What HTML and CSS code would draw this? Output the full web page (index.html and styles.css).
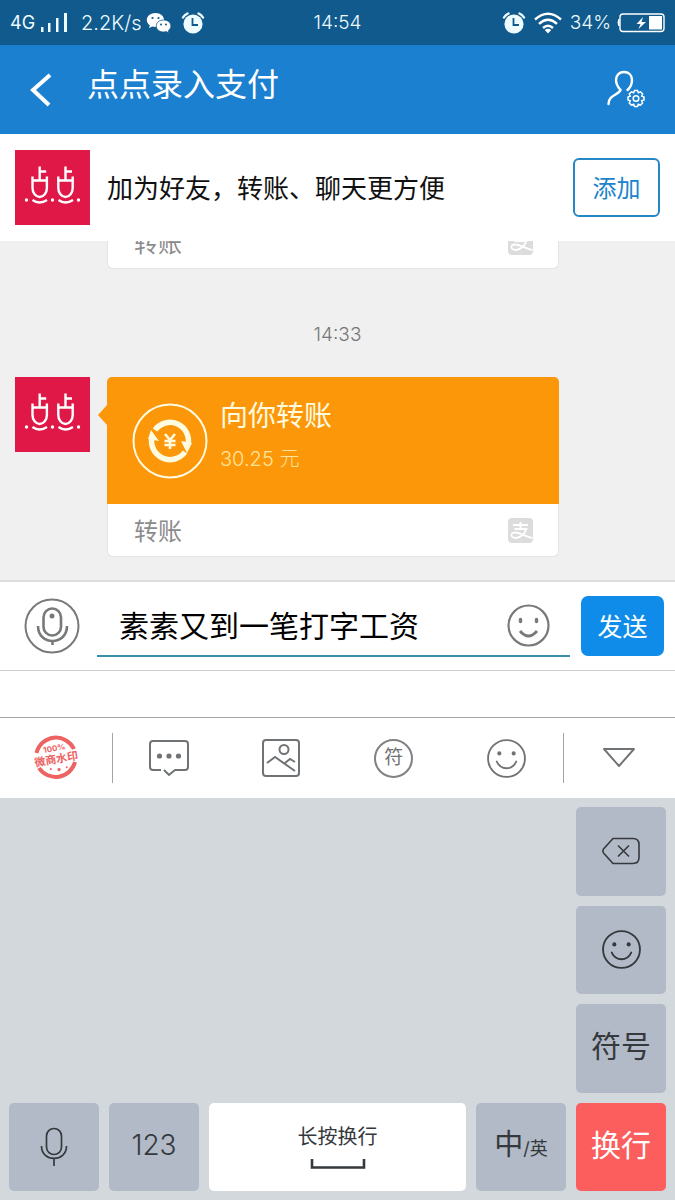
FILE: index.html
```html
<!DOCTYPE html>
<html lang="zh-CN">
<head>
<meta charset="utf-8">
<meta name="viewport" content="width=device-width, initial-scale=1">
<title>点点录入支付</title>
<link rel="stylesheet" href="styles.css">
</head>
<body>
<svg class="defs" width="0" height="0" aria-hidden="true">
  <symbol id="alarm" viewBox="0 0 24 24">
    <circle cx="12" cy="13" r="9.6" fill="currentColor"/>
    <path d="M2 6.500A10 10 0 0 1 6.500 2.500M22 6.500A10 10 0 0 0 17.500 2.500" fill="none" stroke="currentColor" stroke-width="2.400" stroke-linecap="round"/>
    <path d="M11.500 7v7h5.500" fill="none" stroke="#115a8d" stroke-width="1.800"/>
  </symbol>
  <symbol id="avatar" viewBox="0 0 75 75">
    <rect width="75" height="75" fill="#e01848"/>
    <g fill="none" stroke="#fff" stroke-width="2.400">
      <path d="M17.500 26.500V38a7.200 9 0 0 0 14.400 0V26.500M16.500 30.500h16M24.700 30V16.500M24.700 21.500h6.500"/>
      <path d="M43.300 26.500V38a7.200 9 0 0 0 14.400 0V26.500M42.300 30.500h16M50.500 30V16.500M50.500 21.500h6.500"/>
      <path d="M17.500 50q7 5 14.500 0M43.500 50q7 5 14.500 0"/>
    </g>
    <g fill="#fff"><circle cx="11.500" cy="50" r="1.700"/><circle cx="37.500" cy="50" r="1.700"/><circle cx="63.500" cy="50" r="1.700"/></g>
  </symbol>
  <symbol id="alipay" viewBox="0 0 25 25">
    <rect width="25" height="25" rx="4" fill="#dcdcdc"/>
    <path d="M12.500 4v7M5 7h15M6.500 11h12C17 15 13 20 8 20c-6 0-6-5.500-1-5.500 5 0 10 4 17.500 5.500" fill="none" stroke="#fff" stroke-width="1.800"/>
  </symbol>
  <symbol id="smile" viewBox="0 0 40 40">
    <circle cx="20" cy="20" r="18" fill="none" stroke="currentColor" stroke-width="1.800"/>
    <circle cx="13" cy="15" r="2" fill="currentColor"/><circle cx="27" cy="15" r="2" fill="currentColor"/>
    <path d="M10.500 23q3 6.500 9.500 6.500t9.500-6.500" fill="none" stroke="currentColor" stroke-width="1.800" stroke-linecap="round"/>
  </symbol>
</svg>
<div class="app">
  <div class="status">
    <div class="status-side">
      <span class="network">4G</span>
      <svg width="28" height="20" viewBox="0 0 28 20" fill="currentColor"><path d="M1 14h2.500v5H1zM8 10h2.500v9H8zM16 5h2.500v14H16zM24 0h3v19h-3z"/></svg>
      <span class="speed">2.2K/s</span>
      <svg width="26" height="22" viewBox="0 0 26 22">
        <path d="M9.500 1C4.500 1 .8 4 .8 8c0 2.300 1.200 4 3 5.300L3 16l3.300-1.500c1 .3 2 .4 3.200.4 5 0 8.500-3 8.500-6.900S14.500 1 9.500 1z" fill="#fff"/>
        <path d="M17.500 8c-4 0-7.300 2.600-7.300 6s3.200 6 7.300 6c.9 0 1.800-.1 2.600-.4L23 21l-.7-2.400c1.500-1.100 2.600-2.700 2.600-4.600 0-3.400-3.300-6-7.400-6z" fill="#fff" stroke="#115a8d" stroke-width=".8"/>
        <g fill="#115a8d"><circle cx="6.500" cy="6" r="1.100"/><circle cx="12.500" cy="6" r="1.100"/><circle cx="15" cy="12.500" r="1"/><circle cx="20" cy="12.500" r="1"/></g>
      </svg>
      <svg class="alarm" width="24" height="24"><use href="#alarm"/></svg>
    </div>
    <span class="clock">14:54</span>
    <div class="status-side status-end">
      <svg width="24" height="24"><use href="#alarm"/></svg>
      <svg class="wifi" width="28" height="22" viewBox="0 0 28 22"><g fill="none" stroke="#fff" stroke-width="2.400"><path d="M1 7.500q13-11.500 26 0M5 11.800q9-8 18 0M9 16q5-4.500 10 0"/></g><path d="M10.800 18q3.200-2.500 6.400 0L14 21.500z" fill="#fff"/></svg>
      <span>34%</span>
      <svg class="battery" width="48" height="20" viewBox="0 0 48 20"><rect x="3" y="1" width="44" height="17.500" rx="3" fill="none" stroke="#fff" stroke-width="1.400"/><path d="M2 6Q0 9.500 2 13z" fill="#fff" stroke="#fff"/><rect x="32" y="3" width="13" height="13.500" fill="#fff"/><path d="M26 4l-6.500 7h4l-2 5 7.500-7h-4.500z" fill="#fff"/></svg>
    </div>
  </div>

  <header class="header">
    <button class="plain" aria-label="返回"><svg width="24" height="34" viewBox="0 0 24 34" fill="none" stroke="#fff" stroke-width="4"><path d="M21 2L4 17l16 15"/></svg></button>
    <h1>点点录入支付</h1>
    <button class="plain" aria-label="好友设置"><svg width="40" height="40" viewBox="0 0 40 40" fill="none" stroke="#fff">
      <path d="M2.500 34c0-9 10-9 12-14C11 16 10 13 10 10c0-5 3.500-8 8-8s8 3 8 8c0 4-1 7-4.500 10" stroke-width="2.400" stroke-linecap="round"/>
      <g stroke-width="1.500"><path d="M28.500 20.500h3l.8 2.200 2.200-.9 2.100 2.100-.9 2.200 2.300.9v3l-2.300.8.9 2.200-2.100 2.100-2.200-.9-.8 2.300h-3l-.9-2.300-2.200.9-2.100-2.100.9-2.200-2.200-.8v-3l2.200-.9-.9-2.200 2.100-2.100 2.200.9z"/><circle cx="30" cy="28.500" r="2.800"/></g>
    </svg></button>
  </header>

  <section class="friend">
    <svg class="avatar"><use href="#avatar"/></svg>
    <p>加为好友，转账、聊天更方便</p>
    <button class="add">添加</button>
  </section>

  <main class="chat">
    <article class="card previous"><div class="card-foot"><span>转账</span><svg width="25" height="25"><use href="#alipay"/></svg></div></article>
    <time>14:33</time>
    <div class="message">
      <svg class="avatar"><use href="#avatar"/></svg>
      <article class="card">
        <div class="card-main">
          <svg width="76" height="76" viewBox="0 0 76 76" fill="none" stroke="#fffbe0">
            <circle cx="38" cy="38" r="36.500" stroke-width="2"/>
            <g stroke-width="5.500"><path d="M23 27A18.500 18.500 0 0 1 56 42"/><path d="M53 49A18.500 18.500 0 0 1 20 34"/></g>
            <g fill="#fffbe0" stroke="none"><path d="M49 38l11 2-5 10zM27 38l-11-2 3-9z"/></g>
            <path d="M33 31l5 6 5-6M38 37v9M32.500 38h11M32.500 42h11" stroke-width="2.600"/>
          </svg>
          <div class="transfer"><h2>向你转账</h2><p>30.25 元</p></div>
        </div>
        <div class="card-foot"><span>转账</span><svg width="25" height="25"><use href="#alipay"/></svg></div>
      </article>
    </div>
  </main>

  <form class="composer">
    <button class="plain" type="button" aria-label="语音"><svg width="56" height="56" viewBox="0 0 56 56" fill="none" stroke="#77797b"><circle cx="28" cy="28" r="26.500" stroke-width="2"/><g stroke-width="2.600"><rect x="19.500" y="10.500" width="17.500" height="27" rx="8.700"/><path d="M14 28c0 20 29 20 29 0M28.500 43v4"/></g><circle cx="28" cy="18" r="2.500" fill="#77797b" stroke="none"/></svg></button>
    <div class="field">
      <input type="text" aria-label="消息" value="素素又到一笔打字工资">
      <button class="plain" type="button" aria-label="表情"><svg width="43" height="43" viewBox="0 0 43 43" fill="none" stroke="#77797b"><circle cx="21.500" cy="21.500" r="20" stroke-width="2.200"/><path d="M13.500 15.500v2M29.500 15.500v2" stroke-width="3.400" stroke-linecap="round"/><path d="M13 27q8.500 10 17 0" stroke-width="2.800"/></svg></button>
    </div>
    <button class="send" type="button">发送</button>
  </form>
  <div class="candidates"></div>

  <nav class="tools" aria-label="键盘工具">
    <button class="plain" aria-label="微商水印"><svg width="46" height="46" viewBox="0 0 46 46"><g fill="none" stroke="#ed6262" stroke-width="4"><path d="M3.500 18A20 20 0 0 1 41 14M42 27A20 20 0 0 1 6 33"/></g><g transform="rotate(-10 23 23)" class="stamp"><text x="23" y="16" font-size="8">100%</text><text x="23" y="28" font-size="11">微商水印</text><circle cx="16" cy="33" r="1"/><circle cx="24" cy="35" r="1.600"/><circle cx="32" cy="34" r="1"/></g></svg></button>
    <button class="plain" aria-label="短语"><svg width="40" height="40" viewBox="0 0 40 40" fill="none" stroke="#707375" stroke-width="2"><path d="M12 32H4q-3 0-3-3V6q0-3 3-3h32q3 0 3 3v23q0 3-3 3H26l-6 5-5-5"/><g fill="#707375" stroke="none"><circle cx="10.500" cy="18" r="2.600"/><circle cx="20" cy="18" r="2.600"/><circle cx="29.500" cy="18" r="2.600"/></g></svg></button>
    <button class="plain" aria-label="图片"><svg width="40" height="40" viewBox="0 0 40 40" fill="none" stroke="#707375" stroke-width="2"><rect x="2" y="2" width="36" height="36" rx="3"/><circle cx="23" cy="11.500" r="4.500"/><path d="M6 25l8-6 20 14M24 25l5-4 5 3"/></svg></button>
    <button class="plain"><span class="symbol">符</span></button>
    <button class="plain" aria-label="表情面板"><svg width="41" height="41"><use href="#smile"/></svg></button>
    <button class="plain" aria-label="收起键盘"><svg width="34" height="22" viewBox="0 0 34 22" fill="none" stroke="#707375" stroke-width="1.900" stroke-linejoin="round"><path d="M2 2h30L17 19z"/></svg></button>
  </nav>

  <section class="keyboard" aria-label="键盘">
    <button class="key delete" aria-label="删除"><svg width="40" height="28" viewBox="0 0 40 28" fill="none" stroke="currentColor" stroke-width="1.600"><path d="M12 1.500h20q6 0 6 6v13q0 6-6 6H12L2.500 16q-1.500-2 0-4z"/><path d="M17 8.500l11 11M28 8.500l-11 11"/></svg></button>
    <button class="key emoji" aria-label="表情键"><svg width="41" height="41"><use href="#smile"/></svg></button>
    <button class="key symbols">符号</button>
    <button class="key" aria-label="语音输入"><svg width="30" height="40" viewBox="0 0 30 40" fill="none" stroke="currentColor" stroke-width="1.700"><rect x="7.500" y="1.500" width="15" height="26" rx="7.500"/><path d="M2.500 19c0 16.500 25 16.500 25 0M15 31.500V39"/></svg></button>
    <button class="key digits">123</button>
    <button class="key space"><span>长按换行</span><svg width="56" height="11" viewBox="0 0 56 11" fill="none" stroke="currentColor" stroke-width="2.600"><path d="M2 0v8.500h52V0"/></svg></button>
    <button class="key language"><span><span class="chinese">中</span>/英</span></button>
    <button class="key enter">换行</button>
  </section>
</div>
</body>
</html>
```

FILE: styles.css
```css
* { box-sizing: border-box; }
body {
  margin: 0;
  font-family: Inter, "Noto Sans CJK SC", sans-serif;
  color: #111;
}
h1, h2, p { margin: 0; font-weight: 400; }
svg { display: block; flex-shrink: 0; }
.defs { position: absolute; }
button, input { font: inherit; color: inherit; padding: 0; margin: 0; border: 0; border-radius: 0; }
.plain { background: none; display: flex; align-items: center; justify-content: center; }

.app { display: flex; flex-direction: column; min-height: 100vh; background: #fff; }

.status {
  display: grid;
  grid-template-columns: 1fr auto 1fr;
  align-items: center;
  height: 45px;
  padding: 0 10px;
  background: #115a8d;
  color: #eefcff;
  font-size: 19px;
  font-weight: 300;
}
.status-side { display: flex; align-items: center; gap: 5px; }
.status-end { justify-content: flex-end; gap: 8px; }
.network { font-weight: 400; font-size: 18px; }
.speed { margin-left: 8px; font-size: 20px; }
.alarm { margin-left: 4px; }
.battery { margin-left: -2px; }

.header {
  display: flex;
  align-items: center;
  height: 89px;
  padding: 0 29px;
  background: #1b80cf;
  color: #fff;
}
.header h1 { flex: 1; margin-left: 34px; padding-bottom: 10px; font-size: 32px; line-height: 40px; }

.friend {
  display: flex;
  align-items: center;
  gap: 17px;
  height: 107px;
  padding: 0 15px;
}
.friend p { flex: 1; padding-bottom: 2px; font-size: 26px; white-space: nowrap; }
.avatar { width: 75px; height: 75px; }
.add {
  width: 87px;
  height: 59px;
  padding-bottom: 2px;
  border: 2px solid #2587c5;
  border-radius: 6px;
  background: #fff;
  color: #1b84cc;
  font-size: 24px;
}

.chat {
  display: flex;
  flex-direction: column;
  justify-content: flex-end;
  height: 339px;
  overflow: hidden;
  padding: 0 15px 23px;
  background: #f0f0f0;
}
.chat > * { flex-shrink: 0; }
.chat time { align-self: center; padding: 55px 0 31px; font-size: 19px; line-height: 22px; font-weight: 300; color: #777; }
.message { display: flex; gap: 17px; }
.card { position: relative; flex: 1; max-width: 452px; }
.previous { flex: none; width: 452px; margin-left: 92px; }
.card-main {
  display: flex;
  align-items: center;
  gap: 12px;
  height: 127px;
  padding: 0 25px;
  border-radius: 5px 5px 0 0;
  background: #fc970a;
  color: #fffbe0;
}
.card-main::before {
  content: "";
  position: absolute;
  left: -9px;
  top: 28px;
  border: solid transparent;
  border-width: 10px 9px 10px 0;
  border-right-color: #fc970a;
}
.transfer h2 { font-size: 28px; line-height: 42px; }
.transfer p { padding-bottom: 6px; font-size: 20px; line-height: 44px; font-weight: 300; color: #ffe49b; }
.card-foot {
  display: flex;
  align-items: center;
  justify-content: space-between;
  height: 53px;
  padding: 0 25px 0 26px;
  border: 1px solid #e4e4e4;
  border-top: 0;
  border-radius: 0 0 6px 6px;
  background: #fff;
  color: #8b8b8b;
  font-size: 24px;
}
.card-foot span { padding-bottom: 2px; }

.composer {
  display: flex;
  align-items: center;
  height: 91px;
  padding: 0 11px 0 24px;
  border-top: 2px solid #dcdcdc;
  border-bottom: 1px solid #cfcfcf;
}
.field {
  display: flex;
  align-items: center;
  flex: 1;
  min-width: 0;
  height: 62px;
  margin: 0 11px 0 17px;
  padding: 0 20px 0 22px;
  border-bottom: 2px solid #398fac;
}
.field input { flex: 1; min-width: 0; height: 44px; padding-bottom: 3px; background: none; outline: 0; font-size: 30px; color: #000; }
.send { width: 83px; height: 60px; padding-bottom: 2px; border-radius: 7px; background: #0f8ce9; color: #fff; font-size: 25px; }
.candidates { height: 46px; }

.tools {
  display: grid;
  grid-template-columns: repeat(6, 1fr);
  align-items: center;
  height: 81px;
  border-top: 1px solid #a5a5a5;
  color: #707375;
}
.tools button { height: 50px; }
.tools button:first-child { border-right: 1px solid #a5a5a5; }
.tools button:last-child { border-left: 1px solid #a5a5a5; }
.stamp { fill: #ed6262; text-anchor: middle; font-weight: 700; }
.symbol {
  display: flex;
  align-items: center;
  justify-content: center;
  width: 39px;
  height: 39px;
  border: 2px solid #808284;
  border-radius: 50%;
  font-size: 19px;
  line-height: 20px;
}

.keyboard {
  display: grid;
  grid-template-columns: 90px 90px 1fr 90px 90px;
  grid-template-rows: repeat(4, minmax(88px, 1fr));
  gap: 10px;
  flex: 1;
  padding: 9px;
  background: #d3d8dc;
}
.key {
  display: flex;
  align-items: center;
  justify-content: center;
  border-radius: 5px;
  background: #b2bac7;
  color: #35393d;
}
.delete, .emoji, .symbols { grid-column: 5; }
.symbols, .enter { font-size: 30px; line-height: 40px; padding-bottom: 4px; }
.digits { font-size: 28px; font-weight: 300; padding-bottom: 3px; }
.space { flex-direction: column; gap: 8px; background: #fff; font-size: 20px; line-height: 28px; }
.language { font-size: 18px; line-height: 40px; }
.chinese { font-size: 29px; }
.enter { background: #fc5d5d; color: #fff; }
```
